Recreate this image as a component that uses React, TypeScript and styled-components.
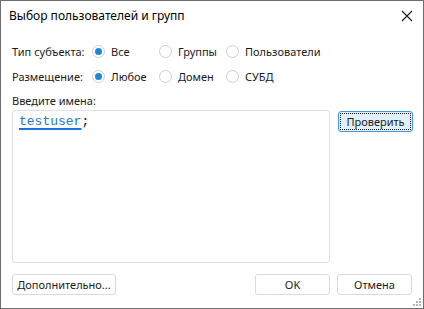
import styled, { createGlobalStyle } from "styled-components";

const GlobalStyle = createGlobalStyle`
  html, body {
    margin: 0;
    padding: 0;
    background: #ffffff;
  }
  * {
    box-sizing: border-box;
  }
`;

const Window = styled.div`
  width: 424px;
  height: 309px;
  border: 1px solid #6e6e6e;
  background: #ffffff;
  display: flex;
  flex-direction: column;
  position: relative;
  font-family: "Noto Sans", "Segoe UI", sans-serif;
  font-size: 11px;
  color: #1b1b1b;
`;

const TitleBar = styled.div`
  height: 29px;
  display: flex;
  align-items: center;
  justify-content: space-between;
  padding: 0 10px 0 8px;
  font-size: 12px;
  color: #000000;
`;

const CloseButton = styled.div`
  width: 12px;
  height: 12px;
  display: flex;
  align-items: center;
  justify-content: center;
`;

const Body = styled.div`
  flex: 1;
  display: flex;
  flex-direction: column;
  padding: 11px 11px 13px 11px;
`;

const OptionRow = styled.div`
  display: grid;
  grid-template-columns: 80px 67px 67px auto;
  align-items: center;
  height: 20px;
  margin-bottom: 5px;
`;

const Label = styled.span`
  white-space: nowrap;
`;

const Option = styled.label`
  display: flex;
  align-items: center;
  gap: 6px;
  white-space: nowrap;
`;

const RadioCircle = styled.span<{ $checked?: boolean }>`
  width: 13px;
  height: 13px;
  border-radius: 50%;
  border: 1px solid #cfcfcf;
  background: #ffffff;
  display: flex;
  align-items: center;
  justify-content: center;

  &::after {
    content: "";
    width: 7px;
    height: 7px;
    border-radius: 50%;
    background: ${({ $checked }) => ($checked ? "#1f86d1" : "transparent")};
  }
`;

const NamesLabel = styled.div`
  height: 17px;
  line-height: 17px;
  margin-top: 1px;
`;

const NamesArea = styled.div`
  flex: 1;
  display: grid;
  grid-template-columns: 318px 75px;
  column-gap: 8px;
  align-items: start;
  margin-top: 1px;
`;

const TextBox = styled.div`
  height: 100%;
  border: 1px solid #e1e1e1;
  border-radius: 3px;
  padding: 3px 6px;
  font-family: "Liberation Mono", "Courier New", monospace;
  font-size: 13px;
`;

const Name = styled.span`
  color: #1c7cc4;
  text-decoration: underline;
  text-decoration-color: #1a74d6;
  text-underline-offset: 3px;
  text-decoration-thickness: 2px;
`;

const Semi = styled.span`
  color: #111111;
`;

const Button = styled.div<{ $focused?: boolean }>`
  height: 21px;
  display: flex;
  align-items: center;
  justify-content: center;
  border: 1px solid ${({ $focused }) => ($focused ? "#3d9ae3" : "#dadada")};
  border-radius: 3px;
  background: ${({ $focused }) => ($focused ? "#e1effb" : "#ffffff")};
  color: #1b1b1b;
  white-space: nowrap;
  position: relative;
  margin-top: ${({ $focused }) => ($focused ? "1px" : "0")};

  ${({ $focused }) =>
    $focused &&
    `
    &::before {
      content: "";
      position: absolute;
      inset: 1px;
      border: 1px dotted #1a1a1a;
    }
  `}
`;

const Footer = styled.div`
  display: grid;
  grid-template-columns: 104px 1fr 75px 75px;
  column-gap: 7px;
  margin-top: 11px;
`;

const Grip = styled.svg`
  position: absolute;
  right: 1px;
  bottom: 1px;
`;

const App = () => {
  return (
    <>
      <GlobalStyle />
      <Window>
        <TitleBar>
          <span>Выбор пользователей и групп</span>
          <CloseButton>
            <svg width="12" height="12" viewBox="0 0 12 12">
              <path d="M1 1L11 11M11 1L1 11" stroke="#1a1a1a" strokeWidth="1.1" />
            </svg>
          </CloseButton>
        </TitleBar>
        <Body>
          <OptionRow>
            <Label>Тип субъекта:</Label>
            <Option>
              <RadioCircle $checked />
              Все
            </Option>
            <Option>
              <RadioCircle />
              Группы
            </Option>
            <Option>
              <RadioCircle />
              Пользователи
            </Option>
          </OptionRow>
          <OptionRow>
            <Label>Размещение:</Label>
            <Option>
              <RadioCircle $checked />
              Любое
            </Option>
            <Option>
              <RadioCircle />
              Домен
            </Option>
            <Option>
              <RadioCircle />
              СУБД
            </Option>
          </OptionRow>
          <NamesLabel>Введите имена:</NamesLabel>
          <NamesArea>
            <TextBox>
              <Name>testuser</Name>
              <Semi>;</Semi>
            </TextBox>
            <Button $focused>Проверить</Button>
          </NamesArea>
          <Footer>
            <Button>Дополнительно...</Button>
            <span />
            <Button>OK</Button>
            <Button>Отмена</Button>
          </Footer>
        </Body>
        <Grip width="10" height="10" viewBox="0 0 10 10">
          {[
            [7, 1],
            [4, 4],
            [7, 4],
            [1, 7],
            [4, 7],
            [7, 7],
          ].map(([x, y]) => (
            <rect key={`${x}-${y}`} x={x} y={y} width="2" height="2" fill="#b5b5b5" />
          ))}
        </Grip>
      </Window>
    </>
  );
};

export default App;
